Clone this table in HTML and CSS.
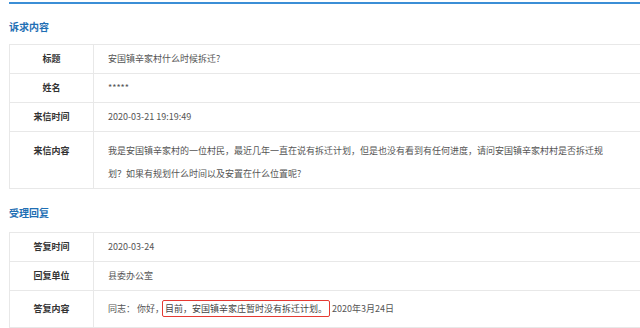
FILE: index.html
```html
<!DOCTYPE html>
<html lang="zh">
<head>
<meta charset="utf-8">
<link rel="stylesheet" href="styles.css">
</head>
<body>
<div class="page">
  <div class="topline"></div>
  <h2 class="sec-title first">诉求内容</h2>
  <table class="info">
    <tr><th>标题</th><td>安国镇辛家村什么时候拆迁?</td></tr>
    <tr><th>姓名</th><td>*****</td></tr>
    <tr><th>来信时间</th><td>2020-03-21 19:19:49</td></tr>
    <tr class="tall"><th>来信内容</th><td><p class="para">我是安国镇辛家村的一位村民，最近几年一直在说有拆迁计划，但是也没有看到有任何进度，请问安国镇辛家村村是否拆迁规划？如果有规划什么时间以及安置在什么位置呢?</p></td></tr>
  </table>
  <h2 class="sec-title second">受理回复</h2>
  <table class="info">
    <tr><th>答复时间</th><td>2020-03-24</td></tr>
    <tr><th>回复单位</th><td>县委办公室</td></tr>
    <tr class="reply"><th>答复内容</th><td>同志：&nbsp;你好，<span class="mark">目前，安国镇辛家庄暂时没有拆迁计划。</span> 2020年3月24日</td></tr>
  </table>
</div>
</body>
</html>
```
FILE: styles.css
```css
html, body {
  margin: 0;
  padding: 0;
  background: #fff;
  overflow: hidden;
}
.page {
  padding-left: 9px;
  padding-top: 2px;
  font-family: "Noto Sans CJK SC", "Microsoft YaHei", sans-serif;
  font-size: 9px;
  color: #555;
  width: 631px;
  overflow: hidden;
}
.topline {
  height: 2px;
  background: #3b8ed6;
}
.sec-title {
  margin: 0;
  font-size: 10px;
  line-height: 20px;
  font-weight: bold;
  color: #1f6fb4;
}
.sec-title.first {
  margin-top: 13px;
  margin-bottom: 7px;
}
.sec-title.second {
  margin-top: 14px;
  margin-bottom: 9px;
}
.info {
  border-collapse: collapse;
  width: 632px;
}
.info th, .info td {
  border: 1px solid #e8e8e8;
  line-height: 22px;
  padding: 3px 14px;
  text-align: left;
  vertical-align: middle;
}
.info th {
  width: 55px;
  text-align: center;
  font-weight: bold;
  color: #333;
}
.tall th, .tall td {
  vertical-align: top;
  line-height: 23px;
  padding-top: 7px;
  padding-bottom: 3px;
}
.para {
  margin: 0;
  width: 500px;
}
.reply th, .reply td {
  padding-top: 7px;
  padding-bottom: 7px;
}
.mark {
  border: 1.5px solid #e53a33;
  border-radius: 2px;
  padding: 1px 2px;
  margin-left: -2px;
  color: #444;
}
```
